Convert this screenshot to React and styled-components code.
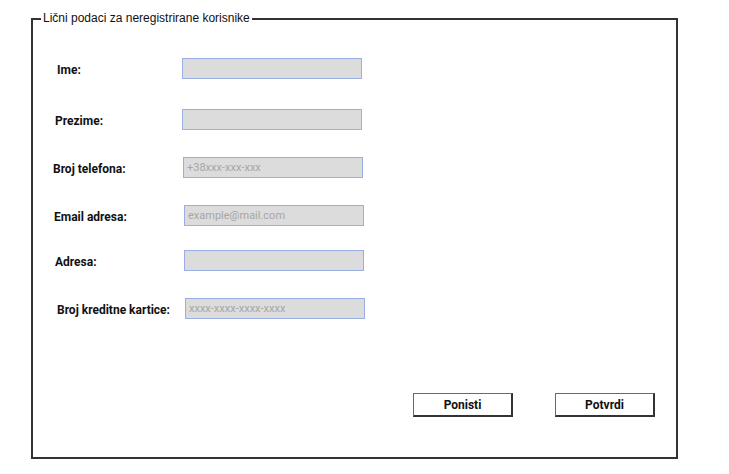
import React from "react";
import styled, { createGlobalStyle } from "styled-components";

const GlobalStyle = createGlobalStyle`
  html, body { margin: 0; padding: 0; background: #ffffff; }
  body { font-family: "Liberation Sans", Arial, sans-serif; }
`;

const Page = styled.div`
  width: 729px;
  height: 474px;
  box-sizing: border-box;
  padding: 11px 0 0 31px;
  background: #ffffff;
`;

const Frame = styled.fieldset`
  margin: 0;
  padding: 0;
  width: 647px;
  box-sizing: border-box;
  border: 2px solid #333333;
  min-inline-size: 0;
`;

const Legend = styled.legend`
  margin-left: 8px;
  padding: 0 2px;
  font-family: "Liberation Sans", Arial, sans-serif;
  font-size: 12px;
  line-height: 15px;
  color: #111111;
`;

const Body = styled.div`
  display: flex;
  flex-direction: column;
  padding: 0 0 40px 0;
`;

const Row = styled.div`
  display: flex;
  align-items: center;
  height: 21px;
  margin-top: ${(p) => p.$mt}px;
  padding-left: ${(p) => p.$lx - 33}px;
`;

const Label = styled.label`
  flex: 0 0 ${(p) => p.$w}px;
  font-family: "Liberation Sans Narrow", "Roboto", sans-serif;
  font-weight: 700;
  font-size: 12px;
  color: #111111;
  padding-top: 3px;
`;

const Field = styled.input`
  width: 180px;
  height: 21px;
  box-sizing: border-box;
  margin: 0;
  padding: 0 3px;
  border: 1px solid #9aaee4;
  background: #dcdcdc;
  font-family: "Liberation Sans Narrow", "Roboto", sans-serif;
  font-size: 11px;
  color: #333;
  outline: none;
  &::placeholder {
    color: #a6a6a6;
  }
`;

const Actions = styled.div`
  display: flex;
  gap: 42px;
  margin-top: 74px;
  padding-left: 380px;
`;

const Button = styled.button`
  width: 100px;
  height: 24px;
  box-sizing: border-box;
  margin: 0;
  padding: 0;
  background: #ffffff;
  border-top: 1px solid #6a6a6a;
  border-left: 1px solid #6a6a6a;
  border-right: 2px solid #333333;
  border-bottom: 2px solid #333333;
  font-family: "Liberation Sans Narrow", "Roboto", sans-serif;
  font-weight: 700;
  font-size: 12px;
  color: #111111;
`;

const rows = [
  { label: "Ime:", lx: 57, ix: 182, mt: 32 },
  { label: "Prezime:", lx: 55, ix: 182, mt: 30 },
  { label: "Broj telefona:", lx: 53, ix: 183, mt: 27, ph: "+38xxx-xxx-xxx" },
  { label: "Email adresa:", lx: 54, ix: 184, mt: 27, ph: "example@mail.com" },
  { label: "Adresa:", lx: 55, ix: 184, mt: 24 },
  { label: "Broj kreditne kartice:", lx: 57, ix: 185, mt: 27, ph: "xxxx-xxxx-xxxx-xxxx" },
];

export default function App() {
  return (
    <>
      <GlobalStyle />
      <Page>
        <Frame>
          <Legend>Lični podaci za neregistrirane korisnike</Legend>
          <Body>
            {rows.map((r) => (
              <Row key={r.label} $mt={r.mt} $lx={r.lx}>
                <Label $w={r.ix - r.lx}>{r.label}</Label>
                <Field placeholder={r.ph || ""} />
              </Row>
            ))}
            <Actions>
              <Button>Ponisti</Button>
              <Button>Potvrdi</Button>
            </Actions>
          </Body>
        </Frame>
      </Page>
    </>
  );
}
